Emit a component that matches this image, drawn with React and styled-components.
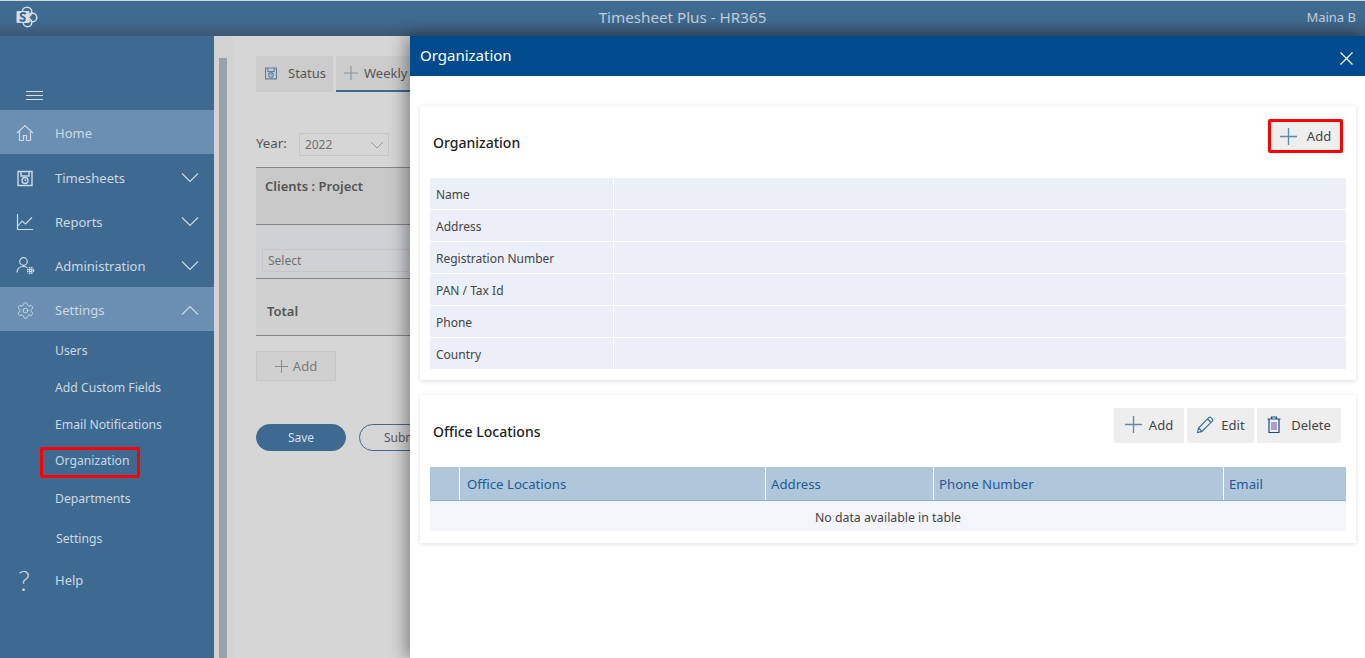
import React from "react";
import styled, { createGlobalStyle } from "styled-components";
import { Settings as GearIcon } from "lucide-react";

const GlobalStyle = createGlobalStyle`
  html, body {
    margin: 0;
    height: 100%;
    overflow: hidden;
    background: #d6d6d6;
    font-family: "Noto Sans", "Open Sans", sans-serif;
    font-size: 13px;
  }
  * { box-sizing: border-box; }
`;

const Logo = () => (
  <svg width="22" height="22" viewBox="0 0 22 22" fill="none">
    <circle cx="11" cy="6" r="4.800" stroke="#d5dde5" strokeWidth="1.500" />
    <circle cx="16.500" cy="11.500" r="4.300" stroke="#d5dde5" strokeWidth="1.500" />
    <circle cx="11.500" cy="16.500" r="4.300" stroke="#d5dde5" strokeWidth="1.500" />
    <rect x="0.500" y="5" width="13" height="12" rx="1" fill="#d5dde5" />
    <path d="M9.800 8a3.200 3.200 0 0 0-2.800-1c-2.800 0-3 3.100-.2 3.900 2.900.8 2.600 3.900-.2 3.900a3.600 3.600 0 0 1-2.900-1.100" stroke="#3e6a91" strokeWidth="2" />
  </svg>
);

const HomeIcon = () => (
  <svg width="18" height="18" viewBox="0 0 18 18" fill="none" stroke="currentColor" strokeWidth="1.200">
    <path d="M1 9 9 1.500 17 9M3.500 7v9.500h4v-5h3v5h4V7" />
  </svg>
);

const DiskIcon = ({ color = "currentColor", size = 18 }) => (
  <svg width={size} height={size} viewBox="0 0 18 18" fill="none" stroke={color}>
    <path d="M2 2.500h14v14H2zM5 2.500v4.500h8V2.500" strokeWidth="1.400" />
    <circle cx="9" cy="11.500" r="3" strokeWidth="1.400" />
    <path d="M9 10v1.500h1.300" />
  </svg>
);

const ChartIcon = () => (
  <svg width="18" height="18" viewBox="0 0 18 18" fill="none" stroke="currentColor" strokeWidth="1.200">
    <path d="M1.500 1v15.500H17" />
    <path d="M2 13l4-5 3.500 3L16 4.500" />
  </svg>
);

const AdminIcon = () => (
  <svg width="20" height="18" viewBox="0 0 20 18" fill="none" stroke="currentColor" strokeWidth="1.200">
    <circle cx="7.500" cy="4.500" r="3.800" />
    <path d="M1 15.500c.3-4 2.700-6 6.500-6 1.500 0 2.800.3 3.800 1" />
    <circle cx="14.500" cy="13.500" r="1.300" strokeWidth="1.400" />
    <circle cx="14.500" cy="13.500" r="3" strokeWidth="1.600" strokeDasharray="1.500 .9" />
  </svg>
);

const ChevronIcon = ({ up }) => (
  <svg width="18" height="10" viewBox="0 0 18 10" fill="none" stroke="currentColor" strokeWidth="1.200">
    <path d={up ? "M1 9.500 9 1.500l8 8" : "M1 .5l8 8 8-8"} />
  </svg>
);

const PlusIcon = ({ size = 18, color = "#5f88ad" }) => (
  <svg width={size} height={size} viewBox="0 0 18 18" stroke={color} strokeWidth="1.400">
    <path d="M0 9h18M9 0v18" />
  </svg>
);

const PencilIcon = () => (
  <svg width="18" height="18" viewBox="0 0 18 18" fill="none" stroke="#2f6aa0" strokeWidth="1.100">
    <path d="M1.500 16.500l1-4.500L12.800 1.700a1.500 1.500 0 0 1 2.100 0l1.400 1.400a1.500 1.500 0 0 1 0 2.100L6 15.500zM2.500 12 6 15.500M11.500 3l3.500 3.500" />
  </svg>
);

const TrashIcon = () => (
  <svg width="14" height="17" viewBox="0 0 14 17" fill="none" stroke="#124f8c" strokeWidth="1.200">
    <path d="M.5 3h13M4.500 3V1h5v2M2 3v13.500h10V3" />
    <path d="M5 6v8M7 6v8M9 6v8" stroke="#6a4fa3" strokeWidth="1" />
  </svg>
);

const CloseIcon = () => (
  <svg width="13" height="13" viewBox="0 0 13 13" stroke="#ffffff" strokeWidth="1.200">
    <path d="M.5.5l12 12M12.500.5l-12 12" />
  </svg>
);

const Page = styled.div`
  position: relative;
  width: 1365px;
  height: 658px;
  display: flex;
  flex-direction: column;
  overflow: hidden;
`;

const TopBar = styled.header`
  height: 36px;
  flex: none;
  display: grid;
  grid-template-columns: 1fr auto 1fr;
  align-items: center;
  padding: 0 9px 3px 9px;
  border-top: 1px solid #d9d9d9;
  background: linear-gradient(#3f6c94 0%, #3f6a90 55%, #3c5875 100%);
  color: #c4ccd4;
`;

const LogoSlot = styled.div`
  display: flex;
  margin-left: 7px;
`;

const AppTitle = styled.div`
  font-size: 15.2px;
`;

const UserName = styled.div`
  justify-self: end;
  font-size: 13px;
`;

const Body = styled.div`
  flex: 1;
  display: flex;
  min-height: 0;
`;

const Sidebar = styled.nav`
  width: 214px;
  flex: none;
  background: #3e6a91;
  color: #ccd9e4;
`;

const Burger = styled.div`
  height: 74px;
  padding: 55px 0 0 26px;
`;

const BurgerLine = styled.div`
  width: 17px;
  height: 1px;
  margin-bottom: 3px;
  background: #d5dee6;
`;

const NavRow = styled.div`
  height: ${(p) => p.$height}px;
  padding: ${(p) => p.$top}px 15px 0 16px;
  display: flex;
  align-items: center;
  background: ${(p) => (p.$active ? "#6a8fb2" : "transparent")};
`;

const NavIcon = styled.span`
  width: 39px;
  display: flex;
  align-items: center;
`;

const NavLabel = styled.span`
  flex: 1;
`;

const HelpMark = styled.span`
  width: 39px;
  padding-left: 2px;
  font-family: "Lato", sans-serif;
  font-weight: 300;
  font-size: 28px;
  line-height: 1;
`;

const SubRow = styled.div`
  height: ${(p) => p.$height}px;
  padding: ${(p) => p.$top}px 0 0 ${(p) => p.$left}px;
  display: flex;
  align-items: center;
  font-size: 12.2px;
`;

const SubMark = styled.span`
  margin-left: -15px;
  padding: 0 8px 0 12px;
  height: 31px;
  line-height: 22px;
  border: 3px solid #ff0000;
  border-radius: 2px;
`;

const Gutter = styled.div`
  width: 19px;
  flex: none;
  padding: 22px 6px 0 5px;
  background: #d2d2d2;
`;

const GutterThumb = styled.div`
  height: 100%;
  background: #9aa2a9;
`;

const Main = styled.main`
  flex: 1;
  min-width: 0;
  padding: 20px 0 0 23px;
  background: #d6d6d6;
  color: #555555;
`;

const Tabs = styled.div`
  display: flex;
  gap: 3px;
  height: 36px;
`;

const Tab = styled.div`
  width: ${(p) => p.$width}px;
  height: 36px;
  padding-bottom: ${(p) => (p.$current ? 0 : 2)}px;
  display: flex;
  align-items: center;
  gap: ${(p) => p.$gap}px;
  padding-left: 8px;
  background: #cccccc;
  border-bottom: ${(p) => (p.$current ? "2px solid #3e6a91" : "0")};
`;

const YearRow = styled.div`
  margin-top: 41px;
  display: flex;
  align-items: center;
  gap: 12px;
  height: 23px;
`;

const YearLabel = styled.span`
  margin-bottom: 3px;
  font-size: 13.3px;
`;

const YearSelect = styled.div`
  width: 90px;
  height: 23px;
  padding: 0 4px 0 5px;
  display: flex;
  align-items: center;
  justify-content: space-between;
  border: 1px solid #c6c6c6;
  font-size: 12px;
  color: #707070;
`;

const GreyTable = styled.div`
  margin-top: 11px;
  width: 360px;
  border-top: 1px solid #858585;
`;

const GreyRow = styled.div`
  height: ${(p) => p.$height}px;
  padding: ${(p) => p.$pad};
  background: ${(p) => p.$bg};
  border-bottom: 1px solid #858585;
  font-weight: 600;
`;

const FakeInput = styled.div`
  height: 23px;
  padding-left: 5px;
  line-height: 21px;
  border: 1px solid #c6c6c6;
  font-size: 12px;
  font-weight: 400;
  color: #707070;
`;

const GhostAdd = styled.div`
  width: 80px;
  height: 30px;
  margin-top: 15px;
  display: flex;
  align-items: center;
  justify-content: center;
  gap: 5px;
  border: 1px solid #c6c6c6;
  background: #d0d0d0;
  color: #7a7a7a;
`;

const FormActions = styled.div`
  display: flex;
  gap: 13px;
  margin-top: 43px;
`;

const PillButton = styled.div`
  width: 90px;
  height: 27px;
  display: flex;
  align-items: center;
  justify-content: center;
  border-radius: 14px;
  border: 1px solid #3e6a91;
  font-size: 12px;
  background: ${(p) => (p.$solid ? "#3e6a91" : "transparent")};
  color: ${(p) => (p.$solid ? "#d7dfe7" : "#5a5a5a")};
`;

const Drawer = styled.aside`
  position: absolute;
  top: 36px;
  left: 410px;
  right: 0;
  bottom: 0;
  background: #ffffff;
  box-shadow: -4px 0 16px rgba(0, 0, 0, 0.4);
`;

const DrawerHead = styled.div`
  height: 40px;
  padding: 0 12px 3px 10px;
  display: flex;
  align-items: center;
  justify-content: space-between;
  background: #004b8d;
  color: #ffffff;
  font-size: 15px;
`;

const DrawerClose = styled.span`
  display: flex;
  margin-top: 7px;
`;

const DrawerBody = styled.div`
  padding: 30px 9px 0 10px;
  display: flex;
  flex-direction: column;
  gap: 15px;
`;

const Card = styled.section`
  height: ${(p) => p.$height}px;
  padding: 0 10px;
  background: #ffffff;
  box-shadow: 0 1px 5px rgba(0, 0, 0, 0.13);
`;

const CardHead = styled.div`
  height: ${(p) => p.$height}px;
  padding: ${(p) => p.$pad};
  display: flex;
  justify-content: space-between;
`;

const CardTitle = styled.h2`
  margin: 0 0 12px;
  padding-left: 3px;
  align-self: center;
  font-size: 14px;
  font-weight: 500;
  color: #222222;
`;

const ButtonRow = styled.div`
  display: flex;
  gap: 3px;
`;

const ToolButton = styled.div`
  width: ${(p) => p.$width}px;
  height: ${(p) => (p.$marked ? 34 : 35)}px;
  padding-bottom: ${(p) => (p.$marked ? 0 : 2)}px;
  display: flex;
  align-items: center;
  justify-content: center;
  gap: ${(p) => p.$gap}px;
  background: #eeeeee;
  color: #444444;
  border: ${(p) => (p.$marked ? "3px solid #ff0000" : "0")};
  border-radius: ${(p) => (p.$marked ? 2 : 0)}px;
`;

const InfoRow = styled.div`
  height: 32px;
  display: grid;
  grid-template-columns: 183px 1fr;
  gap: 1px;
  border-bottom: 1px solid #ffffff;
`;

const InfoCell = styled.div`
  padding: 2px 0 0 6px;
  display: flex;
  align-items: center;
  background: #ebeff8;
  color: #444444;
  font-size: 12px;
`;

const GridHead = styled.div`
  height: 34px;
  display: grid;
  grid-template-columns: 30px 306px 168px 290px 1fr;
  background: #b0c7db;
  border-bottom: 1px solid #8fb0a8;
`;

const GridHeadCell = styled.div`
  padding-left: 5px;
  display: flex;
  align-items: center;
  border-right: 1px solid #ffffff;
  color: #1d5a96;
  font-size: 13.2px;
  &:nth-child(2) {
    padding-left: 7px;
  }
  &:last-child {
    border-right: 0;
  }
`;

const EmptyRow = styled.div`
  height: 30px;
  padding-top: 2px;
  display: flex;
  align-items: center;
  justify-content: center;
  background: #f3f5fa;
  color: #444444;
  font-size: 12.3px;
`;

const navTop = [
  { label: "Timesheets", icon: <DiskIcon />, height: 45, top: 3 },
  { label: "Reports", icon: <ChartIcon />, height: 44, top: 2 },
  { label: "Administration", icon: <AdminIcon />, height: 44, top: 2 },
];

const subItems = [
  { label: "Users", height: 37, top: 2, left: 55 },
  { label: "Add Custom Fields", height: 37, top: 2, left: 55 },
  { label: "Email Notifications", height: 37, top: 2, left: 55 },
  { label: "Organization", height: 37, top: 3, left: 55, marked: true },
  { label: "Departments", height: 37, top: 2, left: 55 },
  { label: "Settings", height: 41, top: 3, left: 56 },
];

const orgFields = ["Name", "Address", "Registration Number", "PAN / Tax Id", "Phone", "Country"];
const officeColumns = ["", "Office Locations", "Address", "Phone Number", "Email"];

const App = () => {
  return (
    <Page>
      <GlobalStyle />
      <TopBar>
        <LogoSlot><Logo /></LogoSlot>
        <AppTitle>Timesheet Plus - HR365</AppTitle>
        <UserName>Maina B</UserName>
      </TopBar>
      <Body>
        <Sidebar>
          <Burger>
            <BurgerLine />
            <BurgerLine />
            <BurgerLine />
          </Burger>
          <NavRow $height={44} $top={2} $active>
            <NavIcon><HomeIcon /></NavIcon>
            <NavLabel>Home</NavLabel>
          </NavRow>
          {navTop.map((item) => (
            <NavRow key={item.label} $height={item.height} $top={item.top}>
              <NavIcon>{item.icon}</NavIcon>
              <NavLabel>{item.label}</NavLabel>
              <ChevronIcon />
            </NavRow>
          ))}
          <NavRow $height={44} $top={2} $active>
            <NavIcon><GearIcon size={19} strokeWidth={1.2} /></NavIcon>
            <NavLabel>Settings</NavLabel>
            <ChevronIcon up />
          </NavRow>
          {subItems.map((item) => (
            <SubRow key={item.label} $height={item.height} $top={item.top} $left={item.left}>
              {item.marked ? <SubMark>{item.label}</SubMark> : item.label}
            </SubRow>
          ))}
          <NavRow $height={44} $top={2}>
            <HelpMark>?</HelpMark>
            <NavLabel>Help</NavLabel>
          </NavRow>
        </Sidebar>
        <Gutter>
          <GutterThumb />
        </Gutter>
        <Main>
          <Tabs>
            <Tab $width={77} $gap={10}>
              <DiskIcon color="#5f7f9f" size={14} />
              Status
            </Tab>
            <Tab $width={120} $current $gap={6}>
              <PlusIcon size={14} color="#8a949c" />
              Weekly
            </Tab>
          </Tabs>
          <YearRow>
            <YearLabel>Year:</YearLabel>
            <YearSelect>
              2022
              <svg width="14" height="8" viewBox="0 0 14 8" fill="none" stroke="#9a9a9a">
                <path d="M1 1l6 6 6-6" />
              </svg>
            </YearSelect>
          </YearRow>
          <GreyTable>
            <GreyRow $height={57} $pad="9px 9px 0" $bg="#c9c9c9">Clients : Project</GreyRow>
            <GreyRow $height={54} $pad="24px 6px 0" $bg="#d0d1d4">
              <FakeInput>Select</FakeInput>
            </GreyRow>
            <GreyRow $height={57} $pad="23px 11px 0" $bg="#d0d0d0">Total</GreyRow>
          </GreyTable>
          <GhostAdd>
            <PlusIcon size={13} color="#8a8a8a" />
            Add
          </GhostAdd>
          <FormActions>
            <PillButton $solid>Save</PillButton>
            <PillButton>Submit</PillButton>
          </FormActions>
        </Main>
      </Body>
      <Drawer>
        <DrawerHead>
          Organization
          <DrawerClose><CloseIcon /></DrawerClose>
        </DrawerHead>
        <DrawerBody>
          <Card $height={274}>
            <CardHead $height={72} $pad="13px 3px 0 0">
              <CardTitle>Organization</CardTitle>
              <ToolButton $marked $width={75} $gap={10}>
                <PlusIcon size={17} />
                Add
              </ToolButton>
            </CardHead>
            {orgFields.map((field) => (
              <InfoRow key={field}>
                <InfoCell>{field}</InfoCell>
                <InfoCell />
              </InfoRow>
            ))}
          </Card>
          <Card $height={148}>
            <CardHead $height={72} $pad="13px 5px 0 0">
              <CardTitle>Office Locations</CardTitle>
              <ButtonRow>
                <ToolButton $width={70} $gap={7}><PlusIcon size={17} />Add</ToolButton>
                <ToolButton $width={67} $gap={7}><PencilIcon />Edit</ToolButton>
                <ToolButton $width={84} $gap={10}><TrashIcon />Delete</ToolButton>
              </ButtonRow>
            </CardHead>
            <GridHead>
              {officeColumns.map((col) => (
                <GridHeadCell key={col}>{col}</GridHeadCell>
              ))}
            </GridHead>
            <EmptyRow>No data available in table</EmptyRow>
          </Card>
        </DrawerBody>
      </Drawer>
    </Page>
  );
};

export default App;
